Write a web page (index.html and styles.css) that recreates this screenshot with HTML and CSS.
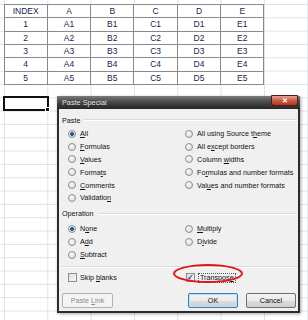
FILE: index.html
```html
<!DOCTYPE html>
<html lang="en">
<head>
  <meta charset="UTF-8">
  <meta name="viewport" content="width=device-width, initial-scale=1.0">
  <title>Paste Special</title>
  <link rel="stylesheet" href="styles.css">
</head>
<body>
  <div class="sheet">
    <div class="data-table">
      <div class="cell">INDEX</div><div class="cell">A</div><div class="cell">B</div><div class="cell">C</div><div class="cell">D</div><div class="cell">E</div>
      <div class="cell">1</div><div class="cell">A1</div><div class="cell">B1</div><div class="cell">C1</div><div class="cell">D1</div><div class="cell">E1</div>
      <div class="cell">2</div><div class="cell">A2</div><div class="cell">B2</div><div class="cell">C2</div><div class="cell">D2</div><div class="cell">E2</div>
      <div class="cell">3</div><div class="cell">A3</div><div class="cell">B3</div><div class="cell">C3</div><div class="cell">D3</div><div class="cell">E3</div>
      <div class="cell">4</div><div class="cell">A4</div><div class="cell">B4</div><div class="cell">C4</div><div class="cell">D4</div><div class="cell">E4</div>
      <div class="cell">5</div><div class="cell">A5</div><div class="cell">B5</div><div class="cell">C5</div><div class="cell">D5</div><div class="cell">E5</div>
    </div>
    <div class="selected-cell"></div>

    <!-- Paste Special dialog -->
    <div class="dialog">
      <div class="titlebar">
        <span class="title">Paste Special</span>
        <span class="close-btn">&#x2715;</span>
      </div>
      <div class="dialog-body">
        <div class="group-label">Paste</div>
        <div class="options paste-options">
          <label class="opt"><span class="radio checked"></span><span><u>A</u>ll</span></label>
          <label class="opt"><span class="radio"></span><span><u>F</u>ormulas</span></label>
          <label class="opt"><span class="radio"></span><span><u>V</u>alues</span></label>
          <label class="opt"><span class="radio"></span><span>Forma<u>t</u>s</span></label>
          <label class="opt"><span class="radio"></span><span><u>C</u>omments</span></label>
          <label class="opt"><span class="radio"></span><span>Validatio<u>n</u></span></label>
          <label class="opt"><span class="radio"></span><span>All using Source t<u>h</u>eme</span></label>
          <label class="opt"><span class="radio"></span><span>All e<u>x</u>cept borders</span></label>
          <label class="opt"><span class="radio"></span><span>Column <u>w</u>idths</span></label>
          <label class="opt"><span class="radio"></span><span>Fo<u>r</u>mulas and number formats</span></label>
          <label class="opt"><span class="radio"></span><span>Val<u>u</u>es and number formats</span></label>
        </div>

        <div class="group-label">Operation</div>
        <div class="options op-options">
          <label class="opt"><span class="radio checked"></span><span>N<u>o</u>ne</span></label>
          <label class="opt"><span class="radio"></span><span>A<u>d</u>d</span></label>
          <label class="opt"><span class="radio"></span><span><u>S</u>ubtract</span></label>
          <label class="opt"><span class="radio"></span><span><u>M</u>ultiply</span></label>
          <label class="opt"><span class="radio"></span><span>D<u>i</u>vide</span></label>
        </div>

        <div class="separator"></div>

        <div class="options check-options">
          <label class="opt"><span class="checkbox"></span><span>Skip <u>b</u>lanks</span></label>
          <label class="opt transpose"><span class="checkbox checked">&#x2713;</span><span class="focus-text">Transpos<u>e</u></span></label>
        </div>

        <div class="buttons">
          <button class="btn disabled">Paste <u>L</u>ink</button>
          <span class="spacer"></span>
          <button class="btn default">OK</button>
          <button class="btn">Cancel</button>
        </div>
      </div>
      <div class="highlight"></div>
    </div>
  </div>
</body>
</html>
```

FILE: styles.css
```css
/* Spreadsheet + Paste Special dialog */
body {
  margin: 0;
  padding: 0;
  background-color: #fff;
  font-family: "Liberation Sans", Arial, sans-serif;
}

.sheet {
  position: relative;
  width: 308px;
  height: 320px;
  overflow: hidden;
  padding: 4px 0 0 4px;
  box-sizing: border-box;
  background-color: #fff;
  background-image:
    linear-gradient(to right, #dde2e9 1px, transparent 1px),
    linear-gradient(to bottom, #dde2e9 1px, transparent 1px);
  background-size: 43.333px 13.333px;
  background-position: 4px 4px;
}

.data-table {
  display: grid;
  grid-template-columns: repeat(6, 43.333px);
  grid-auto-rows: 13.333px;
  width: max-content;
  border-left: 1px solid #8a8a8a;
  border-top: 1px solid #8a8a8a;
  margin-left: -0.5px;
  background-color: #fff;
}

.cell {
  box-sizing: border-box;
  border-right: 1px solid #8a8a8a;
  border-bottom: 1px solid #8a8a8a;
  font-size: 8.5px;
  color: #1c1c4c;
  display: flex;
  align-items: center;
  justify-content: center;
}

.selected-cell {
  position: relative;
  width: 46px;
  height: 15px;
  box-sizing: border-box;
  border: 2px solid #111;
  margin: 11px 0 0 -1px;
}

.selected-cell::after {
  content: "";
  position: absolute;
  right: -3px;
  bottom: -3px;
  width: 3px;
  height: 3px;
  background: #111;
  border: 1px solid #fff;
}

/* dialog */
.dialog {
  position: absolute;
  left: 57px;
  top: 96px;
  width: 243px;
  height: 217px;
  background: #2c2c2c;
  display: flex;
  flex-direction: column;
  font-size: 7.2px;
  color: #111;
  box-shadow: 1px 1px 3px rgba(0, 0, 0, 0.35);
}

.titlebar {
  height: 13px;
  flex: none;
  display: flex;
  align-items: center;
  justify-content: space-between;
  padding: 0 2px 0 5px;
  background: linear-gradient(to bottom, #7b7b7b 0%, #4a4a4a 45%, #262626 100%);
  color: #ececec;
  font-size: 7.3px;
}

.title {
  text-shadow: 0 0 2px rgba(0, 0, 0, 0.6);
}

.close-btn {
  align-self: flex-start;
  width: 27px;
  height: 11px;
  box-sizing: border-box;
  margin-top: -1px;
  border: 1px solid #4e1a12;
  border-radius: 0 0 3px 3px;
  background: linear-gradient(to bottom, #e3a395 0%, #cf5a45 50%, #b83522 100%);
  color: #fff;
  font-size: 7px;
  font-weight: bold;
  display: flex;
  align-items: center;
  justify-content: center;
}

.dialog-body {
  flex: 1;
  margin: 0 2px 2px;
  padding: 6px 1px 0 3px;
  background: #f0f0f0;
}

.group-label {
  display: flex;
  align-items: center;
  height: 10px;
}

.group-label::after {
  content: "";
  flex: 1;
  margin-left: 4px;
  border-top: 1px solid #d5dbe1;
  border-bottom: 1px solid #fff;
}

.options {
  display: grid;
  grid-template-columns: 117px 1fr;
  grid-auto-flow: column;
  grid-auto-rows: 12.8px;
  padding-left: 6px;
}

.paste-options {
  grid-template-rows: repeat(6, 12.8px);
  margin: 2.5px 0 4.7px;
}

.op-options {
  grid-template-rows: repeat(3, 12.8px);
  margin: 3.6px 0 0;
}

.check-options {
  grid-template-rows: 12.8px;
  margin-top: 3.6px;
}

.opt {
  display: flex;
  align-items: center;
  white-space: nowrap;
}

.radio {
  width: 8px;
  height: 8px;
  box-sizing: border-box;
  border-radius: 50%;
  border: 1px solid #8c8e90;
  background: radial-gradient(circle at 40% 35%, #fbfbfb 0%, #dcdcdc 80%);
  margin-right: 4px;
  flex: none;
}

.radio.checked {
  background:
    radial-gradient(circle, #2d6bb8 0%, #1e4f96 1.8px, transparent 2.2px),
    radial-gradient(circle at 40% 35%, #fbfbfb 0%, #dcdcdc 80%);
}

.checkbox {
  width: 9px;
  height: 9px;
  box-sizing: border-box;
  border: 1px solid #8c8e90;
  background: linear-gradient(to bottom right, #dcdcdc, #f8f8f8);
  margin-right: 3px;
  flex: none;
  font-size: 8px;
  line-height: 7px;
  text-align: center;
  color: #1f3f8a;
  font-weight: bold;
}

.transpose {
  margin-left: 1px;
}

.focus-text {
  border: 1px dotted #555;
  padding: 0 1px;
  line-height: 8px;
}

.separator {
  margin-top: 5px;
  border-top: 1px solid #d5dbe1;
  border-bottom: 1px solid #fff;
}

.buttons {
  display: flex;
  margin-top: 9px;
  padding-right: 1px;
  gap: 8px;
}

.spacer {
  flex: 1;
}

.btn {
  width: 50px;
  height: 15px;
  padding: 0;
  border: 1px solid #707070;
  border-radius: 2px;
  background: linear-gradient(to bottom, #f3f3f3 0%, #ebebeb 50%, #dddddd 51%, #cfcfcf 100%);
  font-family: "Liberation Sans", Arial, sans-serif;
  font-size: 7.2px;
  color: #111;
}

.btn.default {
  border-color: #3c7fb1;
  box-shadow: inset 0 0 0 1px #b6e1f7;
}

.btn.disabled {
  width: 51px;
  border-color: #adb2b5;
  background: #f4f4f4;
  color: #8a8a8a;
}

.highlight {
  position: absolute;
  left: 116px;
  top: 168px;
  width: 70px;
  height: 19px;
  box-sizing: border-box;
  border: 2px solid #e3141c;
  border-radius: 50%;
}
```
